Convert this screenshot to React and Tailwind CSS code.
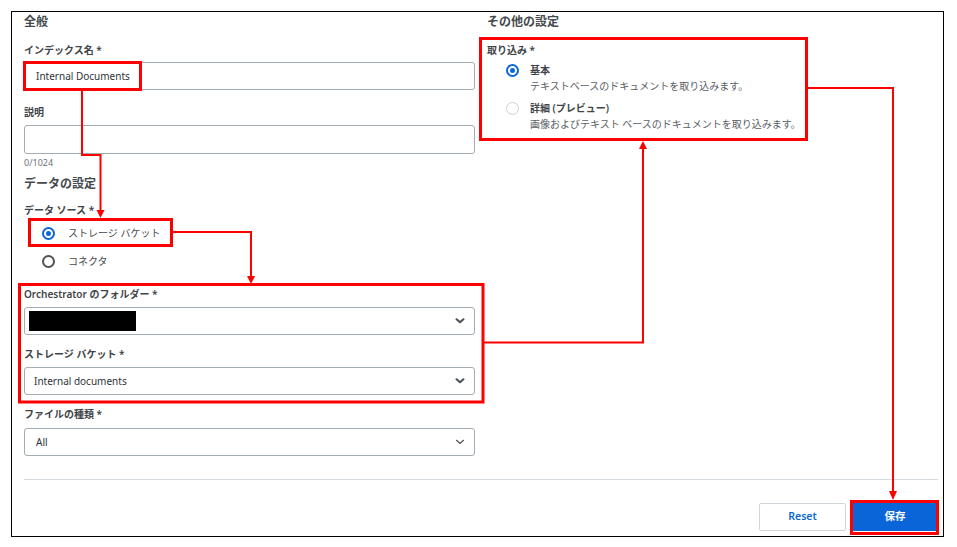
import React from 'react';

const Label = ({ children, className = '' }) => (
    <div className={`h-4 leading-4 text-[10px] font-semibold text-[#3f4448] ${className}`}>{children}</div>
);

const Heading = ({ children }) => (
    <div className="h-5 leading-5 text-[12px] font-semibold text-[#44494d]">{children}</div>
);

const Chevron = ({ thin }) => (
    <svg width="10" height="6" viewBox="0 0 10 6" className="shrink-0">
        {thin ? (
            <path d="M1.5 1.3 L5 4.5 L8.5 1.3" fill="none" stroke="#4b5259" strokeWidth="1.2" strokeLinecap="round" />
        ) : (
            <path d="M1.6 1.3 L5 4.3 L8.4 1.3" fill="none" stroke="#4b5259" strokeWidth="2.1" strokeLinecap="round" strokeLinejoin="round" />
        )}
    </svg>
);

const Select = ({ children, thin, className = '' }) => (
    <div className={`h-[28px] border border-[#a4acb3] rounded-[3px] flex items-center justify-between pr-[9px] ${className}`}>
        <div className="flex items-center">{children}</div>
        <Chevron thin={thin} />
    </div>
);

const Radio = ({ state }) => {
    if (state === 'on') {
        return (
            <div className="w-[13px] h-[13px] rounded-full border-2 border-[#0b67d8] flex items-center justify-center shrink-0">
                <div className="w-[5px] h-[5px] rounded-full bg-[#0b67d8]" />
            </div>
        );
    }
    if (state === 'disabled') {
        return <div className="w-[13px] h-[13px] rounded-full border border-[#c9d0d6] shrink-0" />;
    }
    return <div className="w-[13px] h-[13px] rounded-full border-2 border-[#4d5357] shrink-0" />;
};

const Annotations = () => (
    <svg className="absolute inset-0 pointer-events-none" width="957" height="547" viewBox="0 0 957 547">
        <g fill="none" stroke="#ff0000" strokeWidth="3">
            <rect x="24.5" y="62.5" width="116" height="27" />
            <rect x="29.5" y="219.5" width="142" height="26" />
            <rect x="480.5" y="38.5" width="326" height="101" />
            <rect x="19.5" y="284.5" width="463.5" height="117.5" />
            <rect x="851.5" y="501.5" width="86" height="32" />
        </g>
        <g fill="none" stroke="#ff0000" strokeWidth="2">
            <path d="M82 91 V155 H100.5 V210" />
            <path d="M172 232 H251 V276" />
            <path d="M484 342.5 H643 V149" />
            <path d="M808 88 H893 V491" />
        </g>
        <g fill="#ff0000">
            <polygon points="96.5,210 104.5,210 100.5,218" />
            <polygon points="247,276 255,276 251,284" />
            <polygon points="639,149 647,149 643,141" />
            <polygon points="889,491 897,491 893,500" />
        </g>
    </svg>
);

const App = () => {
    return (
        <div className="relative w-[957px] h-[547px] bg-white font-['Noto_Sans','Noto_Sans_CJK_JP',sans-serif] overflow-hidden">
            <div className="ml-[11px] mt-[11px] w-[933px] h-[526px] border border-black flex flex-col pl-3 pr-[5px]">
                <div className="grid grid-cols-2 gap-3">
                    {/* left column */}
                    <div className="flex flex-col">
                        <Heading>全般</Heading>
                        <Label className="mt-[10px]">インデックス名 *</Label>
                        <div className="mt-1 h-[28px] border border-[#a4acb3] rounded-[3px] flex items-center pl-[11px] text-[10px] text-[#2f3337]">
                            Internal Documents
                        </div>
                        <Label className="mt-[14px]">説明</Label>
                        <div className="mt-[5px] h-[29px] border border-[#a4acb3] rounded-[3px]" />
                        <div className="mt-[3px] h-3 leading-3 text-[9px] text-[#6b7278]">0/1024</div>
                        <div className="mt-[5px]">
                            <Heading>データの設定</Heading>
                        </div>
                        <Label className="mt-2">データ ソース *</Label>
                        <div className="mt-[5px] h-5 flex items-center pl-[18px] gap-[13px] text-[10px] text-[#45494d]">
                            <Radio state="on" />
                            <span>ストレージ バケット</span>
                        </div>
                        <div className="mt-2 h-5 flex items-center pl-[18px] gap-[13px] text-[10px] text-[#45494d]">
                            <Radio state="off" />
                            <span>コネクタ</span>
                        </div>
                        <Label className="mt-[15px]">Orchestrator のフォルダー *</Label>
                        <Select className="mt-[5px] pl-1">
                            <div className="w-[107px] h-[20px] bg-black" />
                        </Select>
                        <Label className="mt-[11px]">ストレージ バケット *</Label>
                        <Select className="mt-[5px] pl-[9px]">
                            <span className="text-[10px] text-[#2f3337]">Internal documents</span>
                        </Select>
                        <Label className="mt-[11px]">ファイルの種類 *</Label>
                        <Select thin className="mt-[6px] pl-[11px]">
                            <span className="text-[10px] text-[#2f3337]">All</span>
                        </Select>
                    </div>

                    {/* right column */}
                    <div className="flex flex-col">
                        <Heading>その他の設定</Heading>
                        <Label className="mt-[10px]">取り込み *</Label>
                        <div className="mt-1 flex items-start pl-[19px] gap-[11px]">
                            <div className="mt-[2px]">
                                <Radio state="on" />
                            </div>
                            <div className="flex flex-col">
                                <div className="h-4 leading-4 text-[10px] font-semibold text-[#3f4448]">基本</div>
                                <div className="h-4 leading-4 text-[10px] text-[#5a6065]">テキストベースのドキュメントを取り込みます。</div>
                            </div>
                        </div>
                        <div className="mt-[6px] flex items-start pl-[19px] gap-[11px]">
                            <div className="mt-[2px]">
                                <Radio state="disabled" />
                            </div>
                            <div className="flex flex-col">
                                <div className="h-4 leading-4 text-[10px] font-semibold text-[#3f4448]">詳細 (プレビュー)</div>
                                <div className="h-4 leading-4 text-[10px] text-[#5a6065]">画像およびテキスト ベースのドキュメントを取り込みます。</div>
                            </div>
                        </div>
                    </div>
                </div>

                <div className="mt-[23px] h-px bg-[#d5dce1]" />

                <div className="mt-[23px] flex justify-end gap-[6px]">
                    <button className="w-[87px] h-[28px] border border-[#cfd7dc] rounded-[2px] bg-white text-[10.5px] font-semibold text-[#0b67d8]">
                        Reset
                    </button>
                    <button className="w-[86px] h-[29px] -mt-px rounded-[2px] bg-[#0a66d8] text-[10.5px] font-semibold text-white">
                        保存
                    </button>
                </div>
            </div>
            <Annotations />
        </div>
    );
};

export default App;
